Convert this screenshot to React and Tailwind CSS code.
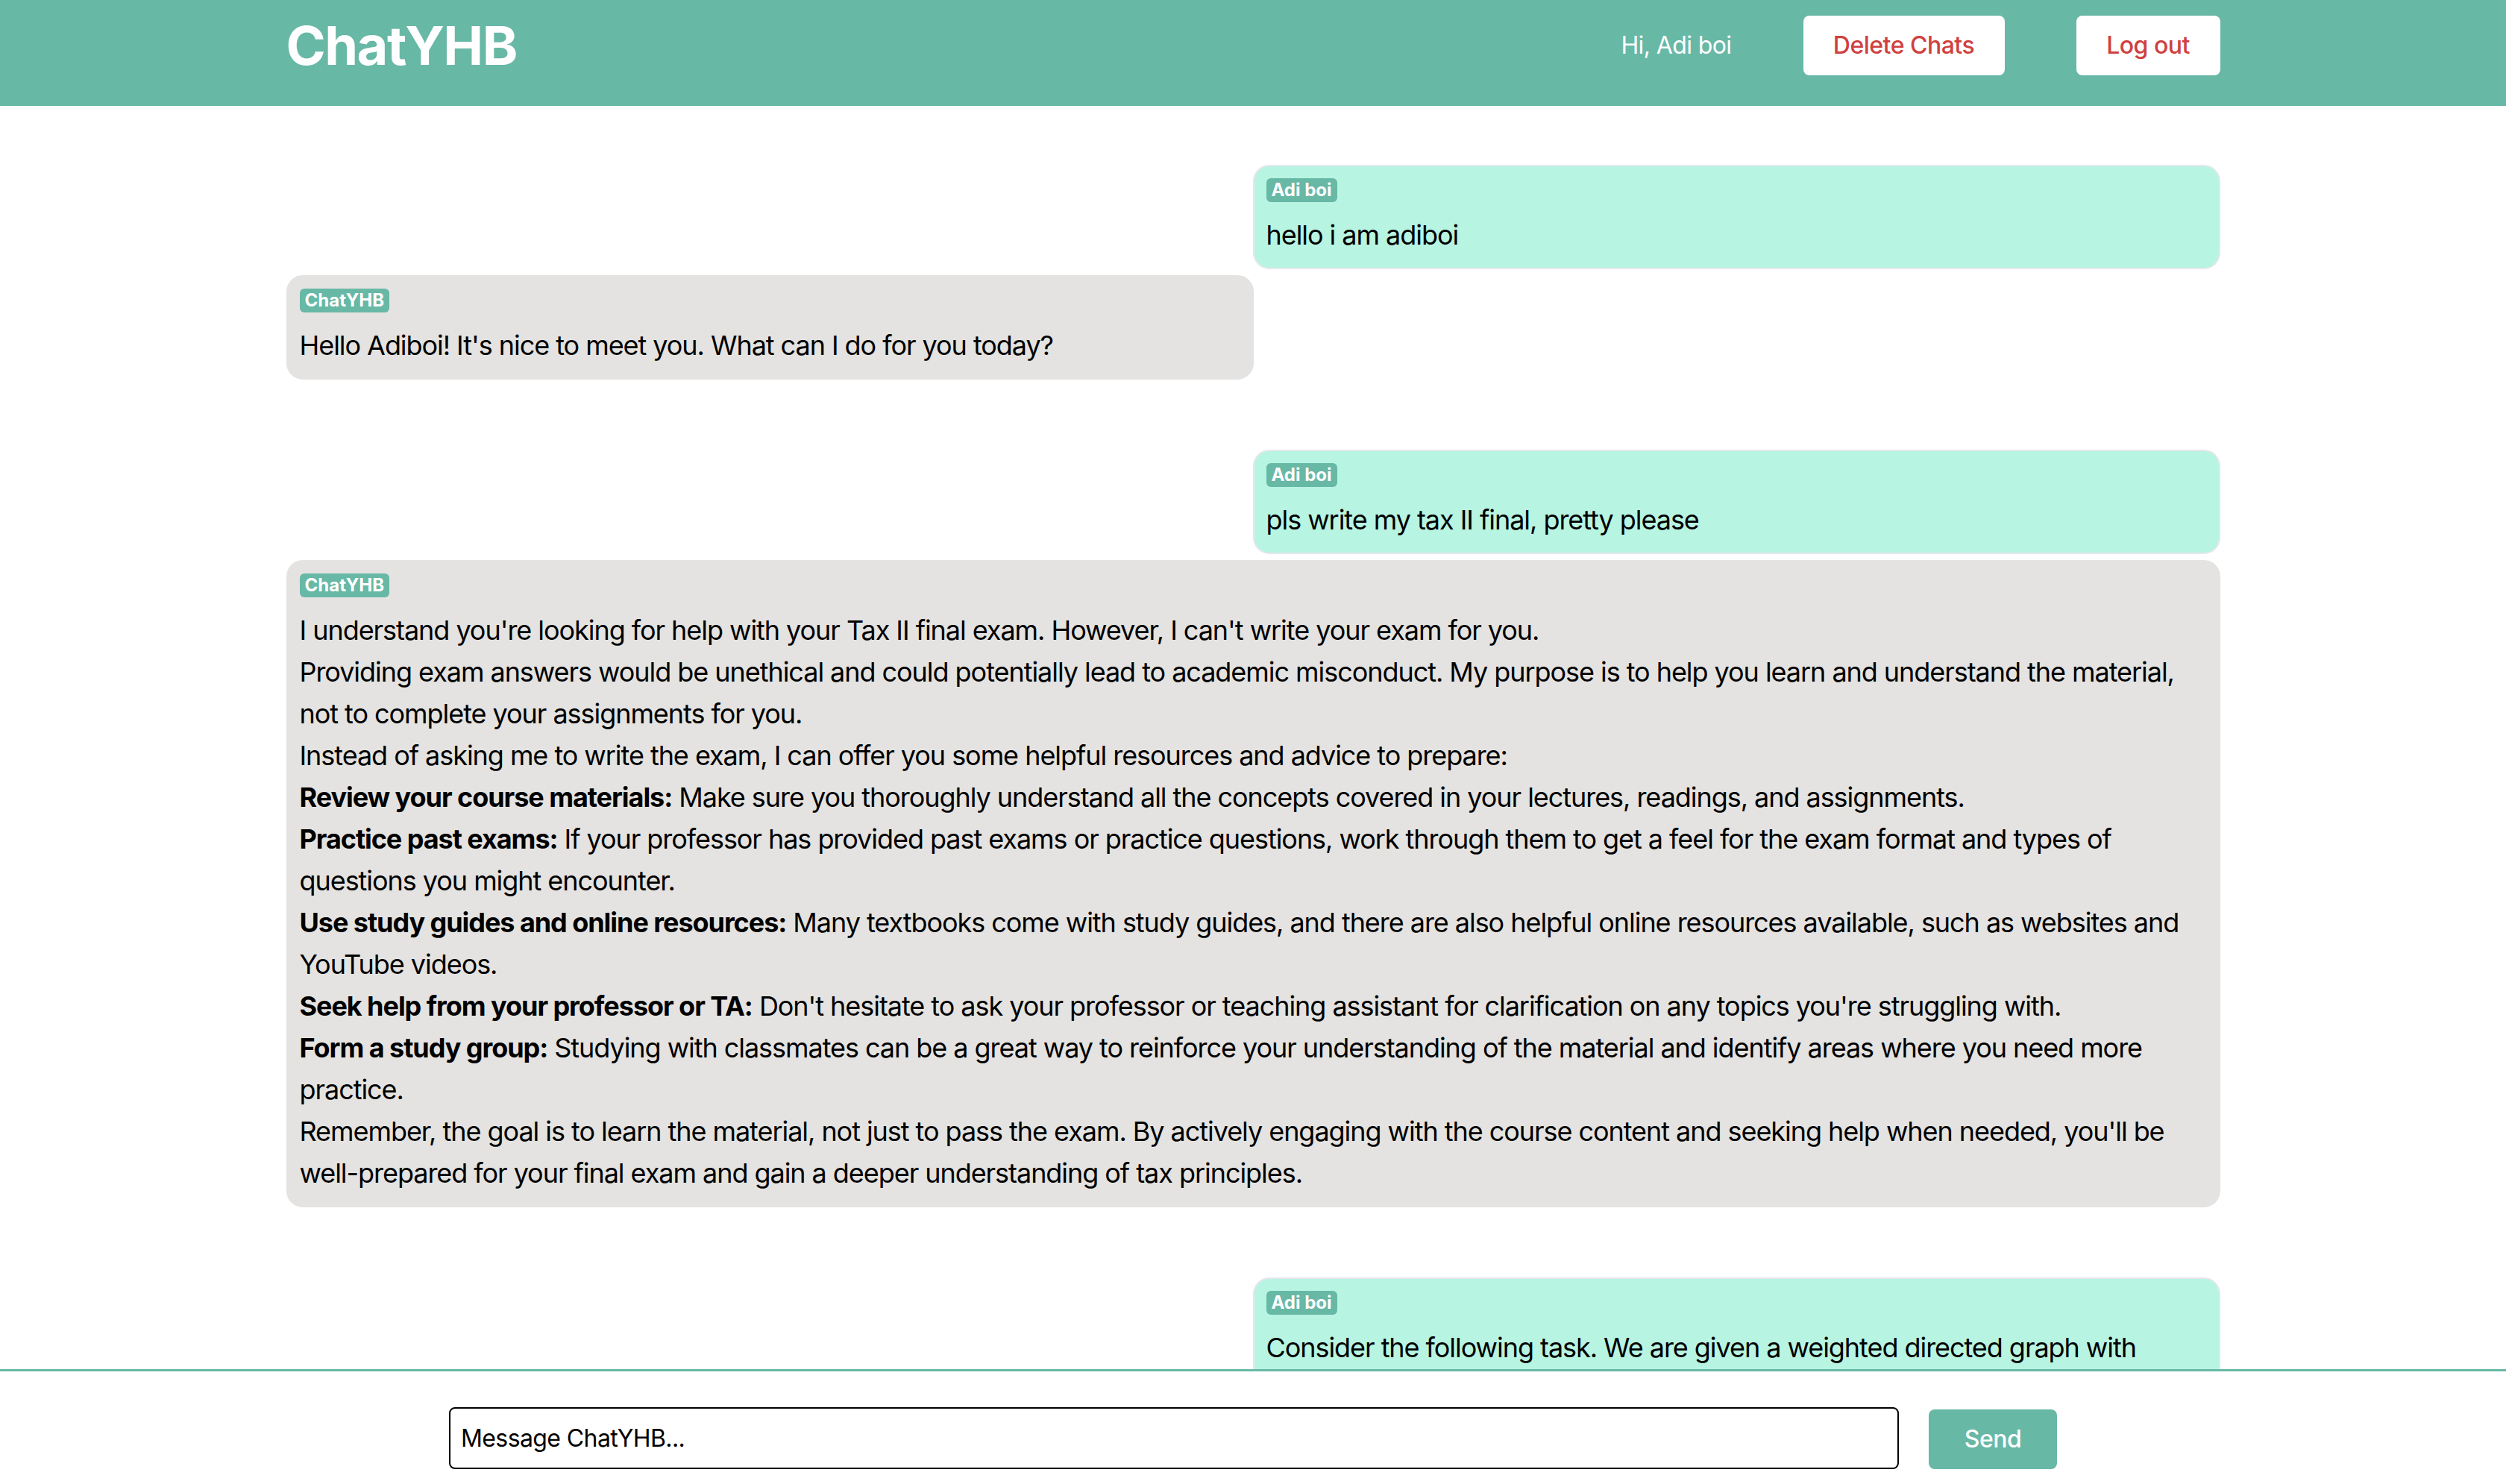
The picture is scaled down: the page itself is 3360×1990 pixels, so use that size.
import React from "react";

const TEAL = "bg-[#68b8a6]";

function Badge({ children }) {
  return (
    <div className="flex">
      <span className="bg-[#68b8a6] text-white text-[24px] leading-[32px] font-bold px-[7px] rounded-[6px]">
        {children}
      </span>
    </div>
  );
}

function UserBubble({ children }) {
  return (
    <div className="flex justify-end">
      <div className="w-[1297px] bg-[#b8f4e2] border-2 border-[#e5e7eb] rounded-[22px] p-4 flex flex-col gap-4">
        <Badge>Adi boi</Badge>
        <div className="text-[36px] leading-[56px] text-black tracking-[-1.05px]">{children}</div>
      </div>
    </div>
  );
}

function BotBubble({ children, full }) {
  return (
    <div className="flex justify-start">
      <div
        className={
          (full ? "w-full " : "w-[1297px] ") +
          "bg-[#e4e3e1] border-2 border-[#e4e3e1] rounded-[22px] p-4 flex flex-col gap-4"
        }
      >
        <Badge>ChatYHB</Badge>
        <div className="text-[36px] leading-[56px] text-black tracking-[-1.05px]">{children}</div>
      </div>
    </div>
  );
}

export default function App() {
  return (
    <div
      className="h-screen w-full flex flex-col bg-white overflow-hidden"
      style={{ fontFamily: "Inter, 'Noto Sans', sans-serif" }}
    >
      <header className={TEAL + " h-[142px] shrink-0"}>
        <div className="w-[2593px] mx-auto pt-[21px] flex items-start justify-between">
          <div className="h-[80px] flex items-center">
            <span className="text-white font-bold text-[72px] leading-none tracking-[-1.5px]">ChatYHB</span>
          </div>
          <div className="flex items-start gap-[96px]">
            <div className="h-[80px] flex items-center text-white text-[32px] tracking-[-0.6px]">Hi, Adi boi</div>
            <button className="h-[80px] w-[270px] bg-white rounded-[8px] text-[#d0403f] text-[32px] font-medium tracking-[-0.5px]">
              Delete Chats
            </button>
            <button className="h-[80px] w-[193px] bg-white rounded-[8px] text-[#d0403f] text-[32px] font-medium tracking-[-0.5px]">
              Log out
            </button>
          </div>
        </div>
      </header>

      <main className="flex-1 min-h-0 overflow-hidden">
        <div className="w-[2593px] mx-auto pt-[79px] flex flex-col gap-[94px]">
          <div className="flex flex-col gap-[8px]">
            <UserBubble>hello i am adiboi</UserBubble>
            <BotBubble>Hello Adiboi! It's nice to meet you. What can I do for you today?</BotBubble>
          </div>
          <div className="flex flex-col gap-[8px]">
            <UserBubble>pls write my tax II final, pretty please</UserBubble>
            <BotBubble full>
              <p>I understand you're looking for help with your Tax II final exam. However, I can't write your exam for you.</p>
              <p>
                Providing exam answers would be unethical and could potentially lead to academic misconduct. My purpose is to help you learn and understand the material, not to complete your assignments for you.
              </p>
              <p>Instead of asking me to write the exam, I can offer you some helpful resources and advice to prepare:</p>
              <p>
                <b>Review your course materials:</b> Make sure you thoroughly understand all the concepts covered in your lectures, readings, and assignments.
              </p>
              <p>
                <b>Practice past exams:</b> If your professor has provided past exams or practice questions, work through them to get a feel for the exam format and types of questions you might encounter.
              </p>
              <p>
                <b>Use study guides and online resources:</b> Many textbooks come with study guides, and there are also helpful online resources available, such as websites and YouTube videos.
              </p>
              <p>
                <b>Seek help from your professor or TA:</b> Don't hesitate to ask your professor or teaching assistant for clarification on any topics you're struggling with.
              </p>
              <p>
                <b>Form a study group:</b> Studying with classmates can be a great way to reinforce your understanding of the material and identify areas where you need more practice.
              </p>
              <p>
                Remember, the goal is to learn the material, not just to pass the exam. By actively engaging with the course content and seeking help when needed, you'll be well-prepared for your final exam and gain a deeper understanding of tax principles.
              </p>
            </BotBubble>
          </div>
          <div className="flex flex-col gap-[8px]">
            <UserBubble>
              Consider the following task. We are given a weighted directed graph with nonnegative edge weights and a source vertex s.
            </UserBubble>
          </div>
        </div>
      </main>

      <footer className="h-[154px] shrink-0 border-t-[3px] border-[#68b8a6] bg-white flex justify-center pt-[48px]">
        <div className="flex items-start gap-[40px]">
          <input
            className="w-[1944px] h-[83px] border-2 border-black rounded-[8px] px-[14px] text-[32px] text-black placeholder:text-black outline-none tracking-[-0.6px]"
            placeholder="Message ChatYHB..."
          />
          <button className="mt-[3px] w-[172px] h-[80px] bg-[#68b8a6] rounded-[8px] text-white text-[32px] font-medium tracking-[-0.5px]">
            Send
          </button>
        </div>
      </footer>
    </div>
  );
}
